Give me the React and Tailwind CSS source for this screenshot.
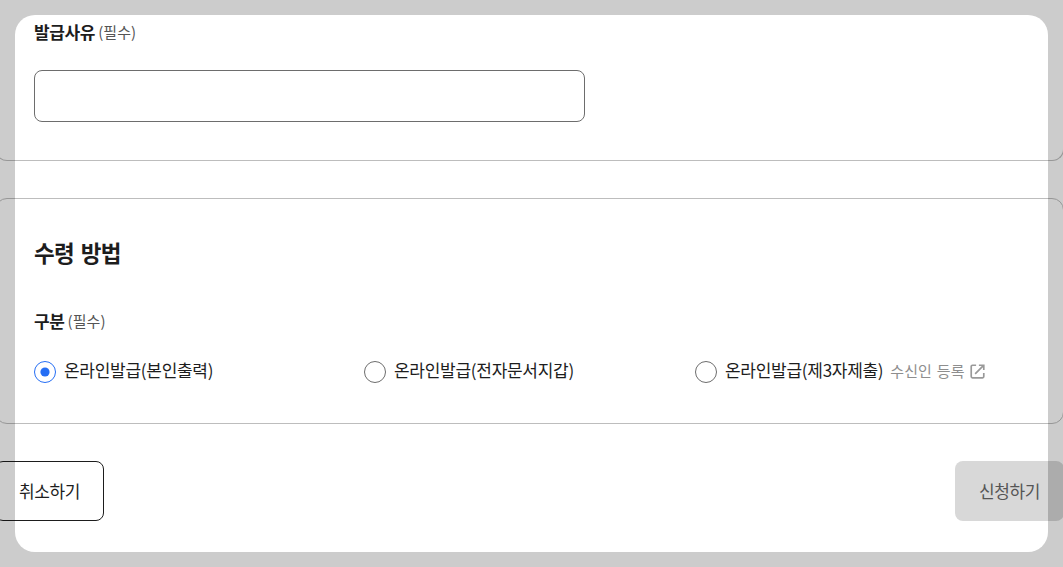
import React from 'react';

const options = [
    { id: 'self', label: '온라인발급(본인출력)', checked: true },
    { id: 'wallet', label: '온라인발급(전자문서지갑)' },
    { id: 'third', label: '온라인발급(제3자제출)', link: '수신인 등록' },
];

function Radio({ checked }) {
    return (
        <svg className="w-[22px] h-[22px] shrink-0" viewBox="0 0 22 22" fill="none">
            <circle cx="11" cy="11" r="10.5" stroke={checked ? '#256ef4' : '#6d6d6d'} strokeWidth="1" />
            {checked && <circle cx="11" cy="11" r="4.6" fill="#256ef4" />}
        </svg>
    );
}

function ExternalIcon() {
    return (
        <svg className="w-[15px] h-[15px] ml-[5px] shrink-0" viewBox="0 0 16 16" fill="none" stroke="#999" strokeWidth="1.8">
            <path d="M6.5 1.3H2.6a1.3 1.3 0 0 0-1.3 1.3v10.8a1.3 1.3 0 0 0 1.3 1.3h10.8a1.3 1.3 0 0 0 1.3-1.3V9.5" />
            <path d="M9.5 1.3h5.2v5.2M14.5 1.5 5.5 10.5" />
        </svg>
    );
}

function FieldLabel({ children }) {
    return (
        <div className="flex items-center h-6 gap-[3px] whitespace-nowrap">
            <span className="text-[17px] font-bold tracking-[-0.35px]">{children}</span>
            <span className="pt-px text-[15px] text-[#555] tracking-[0.05px]">(필수)</span>
        </div>
    );
}

function App() {
    return (
        <main className="relative w-full h-[567px] overflow-hidden bg-white text-[#1d1d1d] font-['Noto_Sans_CJK_KR',sans-serif]">
            <div className="w-[1069px] -ml-[5px]">
                <section className="h-[161px] border border-t-0 border-[#bdbdbd] rounded-b-xl pl-[38px] pt-5">
                    <FieldLabel>발급사유</FieldLabel>
                    <input type="text" aria-label="발급사유" className="block w-[551px] h-[52px] mt-[26px] px-4 border border-[#6d6d6d] rounded-lg" />
                </section>

                <section className="h-[226px] mt-[37px] border border-[#bdbdbd] rounded-xl pl-[38px] pt-[35px]">
                    <h2 className="h-9 leading-9 text-[22.5px] font-bold tracking-[-0.6px] [word-spacing:2px]">수령 방법</h2>
                    <div className="mt-[39px]">
                        <FieldLabel>구분</FieldLabel>
                    </div>
                    <div className="grid grid-cols-[330px_331px_1fr] mt-[25px]">
                        {options.map((o) => (
                            <label key={o.id} className="flex items-center h-6 whitespace-nowrap">
                                <span className="mt-1">
                                    <Radio checked={o.checked} />
                                </span>
                                <span className="ml-2 text-[17px] tracking-[-0.28px]">{o.label}</span>
                                {o.link && (
                                    <a className="flex items-center ml-[7px] mt-0.5 text-[15px] text-[#8e8e8e] tracking-[0.05px] [word-spacing:1.5px]">
                                        {o.link}
                                        <ExternalIcon />
                                    </a>
                                )}
                            </label>
                        ))}
                    </div>
                </section>

                <div className="flex justify-between mt-[37px]">
                    <button className="w-[109px] h-[60px] border border-[#1d1d1d] rounded-lg text-[17px] tracking-[-0.35px]">취소하기</button>
                    <button className="w-[109px] h-[60px] bg-[#d8d8d8] rounded-lg text-[17px] text-[#555] tracking-[-0.35px]">신청하기</button>
                </div>
            </div>

            <div className="absolute inset-[15px] rounded-[20px] shadow-[0_0_0_40px_rgba(0,0,0,0.2)] pointer-events-none"></div>
        </main>
    );
}

export default App;
